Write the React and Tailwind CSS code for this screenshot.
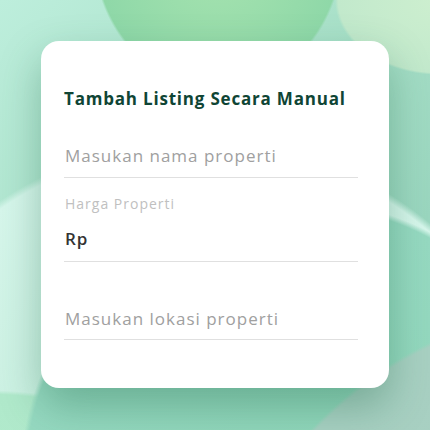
export default function App() {
  return (
    <div
      className="w-[430px] h-[430px] overflow-hidden p-[41px] bg-[radial-gradient(ellipse_125px_140px_at_218px_-50px,#a8e4b0_0%,#8fd8a8_98%,transparent_100%),radial-gradient(ellipse_105px_75px_at_440px_0px,#cdefcf_0%,#c2e9cc_97%,transparent_100%),radial-gradient(circle_396px_at_600px_700px,#a6cfc1_0%,#a8d0c2_99%,transparent_100%),radial-gradient(circle_280px_at_300px_480px,#8fd5b9_0%,#96d9c1_98%,transparent_100%),radial-gradient(ellipse_260px_135px_at_-20px_525px,#b2ebcd_0%,#b0e9cb_97%,transparent_100%),radial-gradient(circle_360px_at_200px_500px,#bde9d6_0%,#d6f6eb_98%,transparent_100%),linear-gradient(135deg,#bdeedc_0%,#a8e0c8_45%,#9ad6bf_75%,#a5cfc1_100%)]"
      style={{ fontFamily: '"Open Sans", "Noto Sans", sans-serif' }}
    >
      <div className="w-[348px] h-[347px] rounded-[18px] bg-white shadow-[0_18px_40px_rgba(30,100,70,0.35)] pt-[46px] pl-[23px] pr-[31px]">
        <div className="text-[17px] leading-[24px] font-bold text-[#0f4535] tracking-[0.8px]">
          Tambah Listing Secara Manual
        </div>

        <div className="mt-[33px] pl-[1px] pb-[9px] border-b-[1.5px] border-[#e0e0e0]">
          <div className="text-[17px] leading-[24px] text-[#a0a0a0] tracking-[1px]">Masukan nama properti</div>
        </div>

        <div className="mt-[17px] pl-[1px] pb-[10px] border-b-[1.5px] border-[#e0e0e0]">
          <div className="text-[14px] leading-[18px] text-[#c0c0c0] tracking-[1px]">Harga Properti</div>
          <div className="mt-[14px] text-[17px] leading-[24px] font-semibold text-[#333333] tracking-[1px]">Rp</div>
        </div>

        <div className="mt-[45px] pl-[1px] pb-[8px] border-b-[1.5px] border-[#e0e0e0]">
          <div className="text-[17px] leading-[24px] text-[#a0a0a0] tracking-[1px]">Masukan lokasi properti</div>
        </div>
      </div>
    </div>
  );
}
